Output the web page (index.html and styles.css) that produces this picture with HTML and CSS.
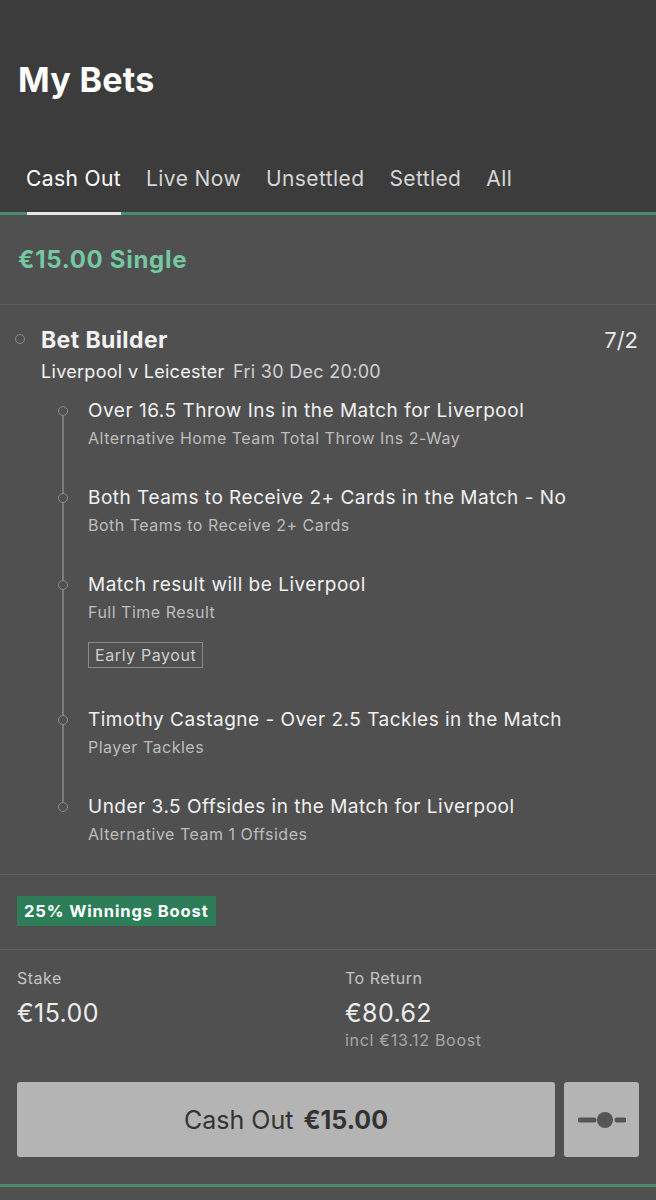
FILE: index.html
```html
<!DOCTYPE html>
<html lang="en">
<head>
    <meta charset="UTF-8">
    <meta name="viewport" content="width=device-width, initial-scale=1.0">
    <title>My Bets</title>
    <link rel="stylesheet" href="styles.css">
</head>
<body>
    <!-- Cabecera con título y pestañas -->
    <header class="top">
        <h1 class="top-title">My Bets</h1>
        <nav class="tabs">
            <span class="tab active">Cash Out</span>
            <span class="tab">Live Now</span>
            <span class="tab">Unsettled</span>
            <span class="tab">Settled</span>
            <span class="tab">All</span>
        </nav>
    </header>

    <main class="bet-card">
        <div class="bet-head">€15.00 Single</div>

        <!-- Selecciones del Bet Builder -->
        <section class="bet">
            <div class="bet-row">
                <span class="bet-name">Bet Builder</span>
                <span class="bet-odds">7/2</span>
            </div>
            <div class="bet-event">Liverpool v Leicester <span class="bet-date">Fri 30 Dec 20:00</span></div>

            <ul class="legs">
                <li class="leg">
                    <div class="leg-title">Over 16.5 Throw Ins in the Match for Liverpool</div>
                    <div class="leg-market">Alternative Home Team Total Throw Ins 2-Way</div>
                </li>
                <li class="leg">
                    <div class="leg-title">Both Teams to Receive 2+ Cards in the Match - No</div>
                    <div class="leg-market">Both Teams to Receive 2+ Cards</div>
                </li>
                <li class="leg">
                    <div class="leg-title">Match result will be Liverpool</div>
                    <div class="leg-market">Full Time Result</div>
                    <span class="leg-tag">Early Payout</span>
                </li>
                <li class="leg">
                    <div class="leg-title">Timothy Castagne - Over 2.5 Tackles in the Match</div>
                    <div class="leg-market">Player Tackles</div>
                </li>
                <li class="leg">
                    <div class="leg-title">Under 3.5 Offsides in the Match for Liverpool</div>
                    <div class="leg-market">Alternative Team 1 Offsides</div>
                </li>
            </ul>
        </section>

        <div class="boost">
            <span class="boost-badge">25% Winnings Boost</span>
        </div>

        <!-- Importe y retorno -->
        <section class="stake">
            <div class="stake-cols">
                <div class="stake-col">
                    <div class="stake-label">Stake</div>
                    <div class="stake-value">€15.00</div>
                </div>
                <div class="stake-col">
                    <div class="stake-label">To Return</div>
                    <div class="stake-value">€80.62</div>
                    <div class="stake-note">incl €13.12 Boost</div>
                </div>
            </div>
            <div class="cashout">
                <button class="cashout-btn">Cash Out <b>€15.00</b></button>
                <button class="slider-btn" aria-label="Partial cash out">
                    <svg width="48" height="18" viewBox="0 0 48 18">
                        <line x1="2" y1="9" x2="16" y2="9" stroke="#555" stroke-width="5" stroke-linecap="round"/>
                        <circle cx="27" cy="9" r="8" fill="#555"/>
                        <line x1="39" y1="9" x2="46" y2="9" stroke="#555" stroke-width="5" stroke-linecap="round"/>
                    </svg>
                </button>
            </div>
        </section>
    </main>
</body>
</html>
```

FILE: styles.css
```css
body {
    margin: 0;
    background: #505050;
    font-family: Inter, Roboto, "Liberation Sans", sans-serif;
    color: #f2f2f2;
}

.top {
    background: #3c3c3c;
    padding-top: 60px;
}

.top-title {
    margin: 0 0 0 18px;
    font-size: 34px;
    line-height: 40px;
    font-weight: 700;
    letter-spacing: 0.3px;
    color: #fff;
}

.tabs {
    display: flex;
    gap: 25px;
    padding: 0 26px 6px;
    margin-top: 50px;
    height: 56px;
    align-items: center;
    border-bottom: 3px solid #4b8a6d;
}

.tab {
    position: relative;
    font-size: 21px;
    letter-spacing: 0.4px;
    color: #d6d6d6;
}

.tab.active {
    color: #fff;
}

/* subrayado de la pestaña activa, encima de la línea verde */
.tab.active::after {
    content: "";
    position: absolute;
    left: 1px;
    right: 0;
    bottom: -24px;
    height: 3px;
    background: #e6e6e6;
}

.bet-head {
    height: 89px;
    display: flex;
    align-items: center;
    padding-left: 18px;
    font-size: 24px;
    font-weight: 700;
    letter-spacing: 0.7px;
    color: #74c8a2;
    border-bottom: 1px solid #5f5f5f;
}

.bet {
    position: relative;
    padding: 22px 18px 30px 41px;
    border-bottom: 1px solid #5f5f5f;
}

.bet-row {
    display: flex;
    justify-content: space-between;
    align-items: center;
    height: 26px;
}

.bet-row::before {
    content: "";
    position: absolute;
    left: 15px;
    top: 29px;
    width: 8px;
    height: 8px;
    border: 1.5px solid #8c8c8c;
    border-radius: 50%;
}

.bet-name {
    font-size: 23px;
    font-weight: 700;
    letter-spacing: 0.4px;
}

.bet-odds {
    font-size: 22px;
    color: #e8e8e8;
}

.bet-event {
    margin-top: 8px;
    font-size: 18px;
    line-height: 22px;
    letter-spacing: 0.3px;
}

.bet-date {
    margin-left: 3px;
    color: #d2d2d2;
}

.legs {
    position: relative;
    list-style: none;
    margin: 16px 0 0;
    padding: 0 0 0 47px;
    display: flex;
    flex-direction: column;
    gap: 38px;
}

/* línea vertical que une las selecciones */
.legs::before {
    content: "";
    position: absolute;
    left: 21px;
    top: 12px;
    bottom: 37px;
    width: 1.5px;
    background: #7c7c7c;
}

.leg {
    position: relative;
}

.leg::before {
    content: "";
    position: absolute;
    left: -30px;
    top: 7px;
    width: 8px;
    height: 8px;
    border: 1.5px solid #8c8c8c;
    border-radius: 50%;
    background: #505050;
}

.leg-title {
    font-size: 19px;
    line-height: 24px;
    letter-spacing: 0.5px;
    color: #f0f0f0;
}

.leg-market {
    margin-top: 5px;
    font-size: 16px;
    line-height: 20px;
    letter-spacing: 0.5px;
    color: #bdbdbd;
}

.leg-tag {
    display: inline-block;
    margin: 20px 0 2px;
    padding: 0 6px;
    height: 24px;
    line-height: 24px;
    border: 1px solid #8a8a8a;
    font-size: 16px;
    letter-spacing: 0.6px;
    color: #cfcfcf;
}

.boost {
    padding: 21px 17px 23px;
    border-bottom: 1px solid #5f5f5f;
}

.boost-badge {
    display: inline-block;
    background: #2e7d59;
    color: #fff;
    font-weight: 700;
    font-size: 16.5px;
    line-height: 30px;
    padding: 0 7px;
    letter-spacing: 0.9px;
}

.stake {
    padding: 18px 17px 27px;
    border-bottom: 3px solid #4b8a6d;
}

.stake-cols {
    display: grid;
    grid-template-columns: 328px 1fr;
}

.stake-label {
    font-size: 16px;
    line-height: 20px;
    letter-spacing: 0.5px;
    color: #c4c4c4;
}

.stake-value {
    margin-top: 10px;
    font-size: 25px;
    line-height: 30px;
    letter-spacing: 0.4px;
    color: #ececec;
}

.stake-note {
    margin-top: 2px;
    font-size: 16px;
    line-height: 20px;
    letter-spacing: 0.7px;
    color: #a8a8a8;
}

.cashout {
    display: flex;
    gap: 9px;
    margin-top: 32px;
}

.cashout-btn,
.slider-btn {
    height: 75px;
    border: none;
    border-radius: 3px;
    background: #b4b4b4;
    font-family: inherit;
    color: #333;
}

.cashout-btn {
    flex: 1;
    font-size: 25px;
}

.cashout-btn b {
    margin-left: 3px;
}

.slider-btn {
    width: 75px;
    display: flex;
    align-items: center;
    justify-content: center;
    padding: 0;
}
```
